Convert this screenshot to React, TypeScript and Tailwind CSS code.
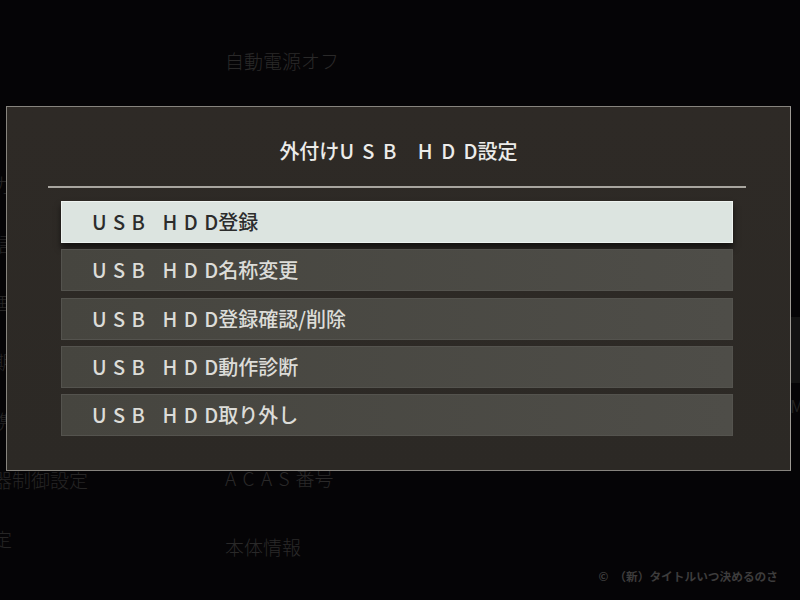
const leftItems = ['入力設定', '通信設定', '録画設定', '初期設定', '連携設定', '機器制御設定', '設定'];
const rightItems = ['自動電源オフ', '省エネ設定', '時計設定', '郵便番号設定', 'ソフトウェア更新', 'ダウンロード設定', 'ACAS番号', '本体情報'];

const menu = ['登録', '名称変更', '登録確認/削除', '動作診断', '取り外し'];

function Spaced({ text, wide }: { text: string; wide?: boolean }) {
  // latin letters are drawn wide apart on this screen
  return <span className={wide ? 'tracking-[8.5px] -mr-[8.5px]' : 'tracking-[6.5px] -mr-[6.5px]'}>{text}</span>;
}

function BgLabel({ label }: { label: string }) {
  if (label.startsWith('ACAS')) {
    return (
      <span>
        <Spaced text="ACAS" />
        <span className="ml-[6px]">番号</span>
      </span>
    );
  }
  return <span>{label}</span>;
}

export default function App() {
  const selected = 0;

  return (
    <div className="relative w-[800px] h-[600px] overflow-hidden bg-[#050406] font-['Noto_Sans_CJK_JP','Noto_Sans',sans-serif]">
      {/* settings screen behind the dialog */}
      <div className="grid h-full">
        <div className="[grid-area:1/1] flex h-full">
          <div className="-ml-[26px] w-[251px] shrink-0 pt-[156px] flex flex-col">
            {leftItems.map((l, i) => (
              <div key={i} className="h-[59px] flex items-center whitespace-nowrap text-[19px] font-light text-[#262525]">
                {l}
              </div>
            ))}
          </div>
          <div className="flex-1 pt-[27px] flex flex-col">
            {rightItems.map((l, i) => (
              <div key={i} className="h-[69.4px] flex items-center whitespace-nowrap text-[19px] font-light text-[#2a2929]">
                <BgLabel label={l} />
              </div>
            ))}
          </div>
          <div className="w-[10px] shrink-0 flex flex-col">
            <div className="mt-[317px] h-[66px] bg-[#131313]" />
            <div className="mt-[14px] text-[17px] text-[#222] leading-none">M</div>
          </div>
        </div>

        <div className="[grid-area:1/1] self-end justify-self-end pr-[22px] pb-[15px] text-[11.7px] font-bold text-[#3d3c3c] whitespace-nowrap">
          ©<span className="ml-[6px]">（新）タイトルいつ決めるのさ</span>
        </div>
      </div>

      {/* dialog */}
      <div className="absolute left-[6px] top-[106px] w-[785px] h-[365px] border border-[#87847e] border-r-[#9d9a94] bg-linear-to-b from-[#2e2a26] to-[#2c2925] flex flex-col">
        <div className="h-[79px] pt-[9px] flex items-center justify-center text-[20px] font-medium text-[#ececea] whitespace-nowrap">
          外付け<Spaced text="USB HDD" wide />設定
        </div>
        <div className="ml-[41px] mr-[44px] h-[2px] bg-[#a8a59f]" />
        <div className="mt-[13px] ml-[54px] mr-[57px] flex flex-col gap-[6.3px]">
          {menu.map((m, i) => (
            <div
              key={i}
              className={
                i === selected
                  ? 'h-[42px] flex items-center pl-[30px] text-[20px] font-medium whitespace-nowrap bg-[#dce4e0] border border-[#eef3f0] text-[#2c2c2c] shadow-[0_5px_6px_rgba(0,0,0,0.55)]'
                  : 'h-[42px] flex items-center pl-[30px] text-[20px] font-medium whitespace-nowrap bg-linear-to-r from-[#46453f] to-[#4e4d48] border border-[#54534e] text-[#dcdcd8]'
              }
            >
              <Spaced text="USB HDD" />
              {m}
            </div>
          ))}
        </div>
      </div>
    </div>
  );
}
